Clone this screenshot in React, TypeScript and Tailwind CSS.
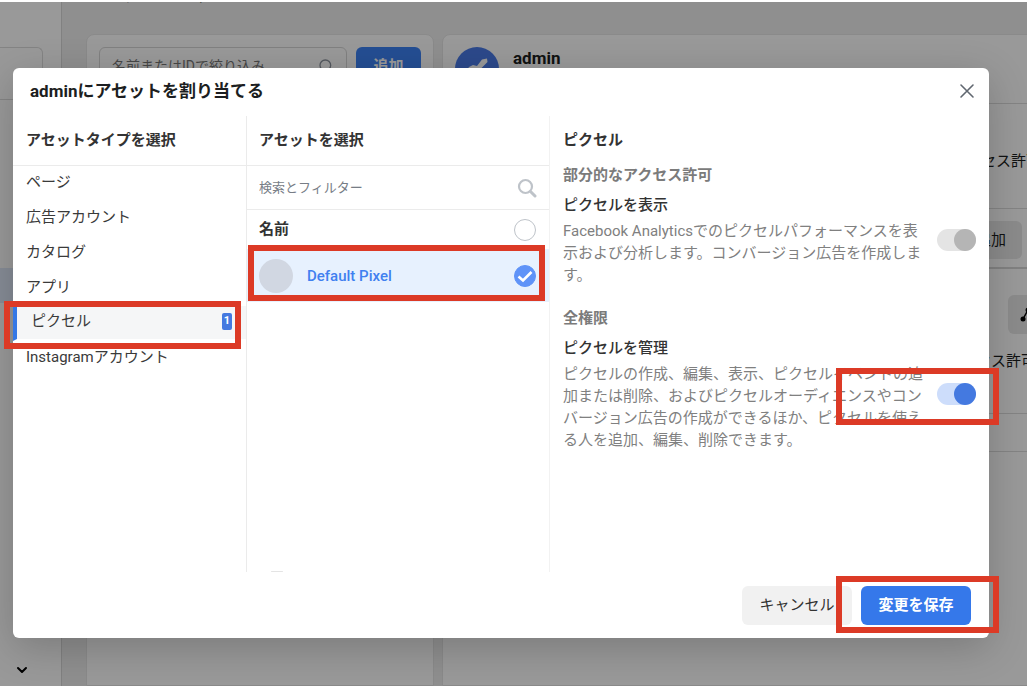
import React, { useState } from 'react';
import { ChevronDown, Search, X } from 'lucide-react';
import clsx from 'clsx';

const assetTypes = [
  { id: 'page', label: 'ページ', count: 0 },
  { id: 'ad', label: '広告アカウント', count: 0 },
  { id: 'catalog', label: 'カタログ', count: 0 },
  { id: 'app', label: 'アプリ', count: 0 },
  { id: 'pixel', label: 'ピクセル', count: 1 },
  { id: 'instagram', label: 'Instagramアカウント', count: 0 },
];

// Red frame drawn around the step the reader should follow
const Marker: React.FC<{ className: string }> = ({ className }) => (
  <span className={clsx('pointer-events-none absolute z-20 border-6 border-[#dc3a26]', className)} />
);

const Backdrop: React.FC = () => (
  <div className="absolute inset-0 flex overflow-hidden bg-[#efefef]" aria-hidden="true">
    <aside className="flex w-[62px] shrink-0 flex-col border-r border-[#d8d8d8] bg-white">
      <div className="h-[100px] border-b border-[#dcdcdc] pt-[47px]">
        <div className="mr-[18px] h-10 rounded-tr-md border-t border-r border-[#dcdcdc]" />
      </div>
      <div className="mt-[168px] h-[35px] bg-[#dfe9fb]" />
      <ChevronDown className="mt-auto mb-2 ml-3.5 h-4 w-4 text-black" strokeWidth={3} />
    </aside>

    <main className="flex min-w-0 flex-1 flex-col pl-6">
      <div className="h-[34px] shrink-0 overflow-hidden">
        <h1 className="-mt-[15px] text-lg leading-5 font-bold">システムユーザー</h1>
      </div>
      <div className="-mr-4 flex flex-1 gap-2">
        <section className="w-[348px] shrink-0 rounded-t-lg border border-[#e6e6e6] bg-white p-3">
          <div className="flex gap-[9px]">
            <div className="flex h-[38px] min-w-0 flex-1 items-center justify-between rounded-md border border-[#d8d8d8] px-3 text-[#8d949e]">
              <span className="text-sm text-[#777]">名前またはIDで絞り込み</span>
              <Search className="h-4 w-4" />
            </div>
            <div className="flex h-[38px] w-[65px] items-center justify-center rounded-md bg-[#3c83f6] text-[15px] font-bold text-white">
              追加
            </div>
          </div>
        </section>

        <section className="min-w-0 flex-1 rounded-tl-lg border border-[#e6e6e6] bg-white">
          <div className="flex h-[69px] gap-3.5 border-b border-[#dcdcdc] pt-3 pl-3">
            <svg viewBox="0 0 44 44" className="h-11 w-11">
              <circle cx="22" cy="22" r="22" fill="#4a7be8" />
              <path
                d="M10 26 L14 20 L18 18 L22 19 L27 12.500 L32 11.500 L32.500 15 L26 21.500 L27 26 L22 31 L17 33 L11 30 Z"
                fill="#fff"
              />
            </svg>
            <p className="-mt-px text-[17px] leading-6 font-bold">admin</p>
          </div>
          <div className="flex h-[105px] items-center justify-end border-b border-[#dcdcdc] pt-2.5 pr-px text-[15px]">
            アクセス許可
          </div>
          <div className="flex h-[60px] items-center justify-end border-b-2 border-[#d8d8d8] pt-1 pr-5 text-[15px]">
            <span className="rounded-md bg-[#e8e8e8] py-2 pr-4 pl-10">追加</span>
          </div>
          <div className="h-[145px] border-b border-[#dcdcdc] pt-[26px]">
            <div className="ml-auto flex h-[39px] w-[34px] items-center rounded-md bg-[#e8e8e8] pl-3">
              <svg viewBox="0 0 20 20" className="h-5 w-5 shrink-0 text-black">
                <path d="M3 14 L8 5 L16 14" fill="none" stroke="currentColor" strokeWidth="1.5" />
                <circle cx="3" cy="14" r="2.500" fill="currentColor" />
                <circle cx="8" cy="5" r="2.500" fill="currentColor" />
                <circle cx="16" cy="14" r="2.500" fill="currentColor" />
              </svg>
            </div>
            <p className="pt-4 pr-1.5 text-right text-[15px]">アクセス許可</p>
          </div>
          <div className="h-[38px] border-b border-[#dcdcdc]" />
        </section>
      </div>
    </main>
    <div className="absolute inset-0 bg-black/40" />
    <div className="absolute inset-x-0 top-0 h-0.5 bg-white" />
  </div>
);

interface PermissionProps {
  id: string;
  title: string;
  description: string;
  checked: boolean;
  disabled?: boolean;
  marked?: boolean;
  onChange?: () => void;
}

const Permission: React.FC<PermissionProps> = ({ id, title, description, checked, disabled, marked, onChange }) => (
  <div className="flex items-center gap-3">
    <div className="min-w-0 flex-1">
      <label htmlFor={id} className="block pb-1 text-[15px] leading-[22px] font-medium text-[#333]">
        {title}
      </label>
      <p className="text-[15px] leading-[22px] text-[#808080]">{description}</p>
    </div>
    <div className="relative flex shrink-0">
      <input
        id={id}
        type="checkbox"
        role="switch"
        checked={checked}
        disabled={disabled}
        onChange={onChange}
        className="h-[22px] w-[39px] appearance-none rounded-full bg-[#e4e4e4] before:block before:h-[22px] before:w-[22px] before:rounded-full before:bg-[#b5b5b5] checked:bg-[#cdddfb] checked:before:ml-[17px] checked:before:bg-[#4479e0] disabled:bg-[#e4e4e4] disabled:before:bg-[#b5b5b5]"
      />
      {marked && <Marker className="-top-[15px] -right-[23px] -bottom-5 -left-[101px]" />}
    </div>
  </div>
);

const AssignDialog: React.FC = () => {
  const [selected, setSelected] = useState('pixel');
  const [pixelChecked, setPixelChecked] = useState(true);
  const [manage, setManage] = useState(true);

  return (
    <div
      role="dialog"
      aria-labelledby="dialog-title"
      className="flex h-full min-h-[570px] flex-col rounded-md bg-white shadow-[0_10px_40px_rgba(0,0,0,0.2)]"
    >
      <header className="flex h-12 shrink-0 items-center justify-between pr-3.5 pl-[17px]">
        <h2 id="dialog-title" className="text-[17px] font-bold text-[#1c1e21]">
          adminにアセットを割り当てる
        </h2>
        <button type="button" aria-label="閉じる" className="pb-0.5 text-[#606770]">
          <svg viewBox="0 0 16 16" className="h-4 w-4">
            <path d="M2 2 L14 14 M14 2 L2 14" fill="none" stroke="currentColor" strokeWidth="1.6" strokeLinecap="round" />
          </svg>
        </button>
      </header>

      <div className="flex flex-1">
        {/* Asset types */}
        <nav className="w-[233px] shrink-0">
          <h3 className="h-[50px] border-b border-[#ebebeb] pl-[13px] text-[15px] leading-[48px] font-bold text-[#333]">
            アセットタイプを選択
          </h3>
          <ul>
            {assetTypes.map(({ id, label, count }) => (
              <li key={id} className="relative">
                <button
                  type="button"
                  onClick={() => setSelected(id)}
                  className={clsx(
                    'flex h-[35px] w-full items-center justify-between pr-3.5 pb-0.5 text-[15px] text-[#3a3a3a]',
                    selected === id ? 'border-b-2 border-l-4 border-b-white border-l-[#3578e5] bg-[#f5f6f7] pl-3.5' : 'pl-[13px]'
                  )}
                >
                  {label}
                  {count > 0 && (
                    <span className="flex h-[17px] w-2.5 items-center justify-center rounded-xs bg-[#4479e0] text-[11px] font-bold text-white">
                      {count}
                    </span>
                  )}
                </button>
                {count > 0 && <Marker className="-top-[5px] right-[5px] -bottom-2 -left-[9px]" />}
              </li>
            ))}
          </ul>
        </nav>

        {/* Assets */}
        <section className="flex w-[303px] shrink-0 flex-col border-l border-[#ebebeb]">
          <h3 className="h-[50px] border-b border-[#ebebeb] pl-3 text-[15px] leading-[48px] font-bold text-[#333]">
            アセットを選択
          </h3>
          <div className="flex h-11 items-center border-b border-[#ebebeb] pr-3 pl-3">
            <input
              type="text"
              aria-label="検索とフィルター"
              placeholder="検索とフィルター"
              className="min-w-0 flex-1 text-[13px] outline-none placeholder:text-[#777d86]"
            />
            <svg viewBox="0 0 20 20" className="h-5 w-5 text-[#bec3c9]" fill="none" stroke="currentColor">
              <circle cx="8.500" cy="8.500" r="6.500" strokeWidth="2.200" />
              <path d="M13.500 13.500 L18 18" strokeWidth="3" strokeLinecap="round" />
            </svg>
          </div>
          <label className="flex h-[39px] items-center justify-between pr-[13px] pl-3 text-[15px] font-bold text-[#333]">
            名前
            <input type="checkbox" className="h-[22px] w-[22px] appearance-none rounded-full border border-[#bec3c9]" />
          </label>
          <div className="relative">
            <label className="flex h-[53px] items-center bg-[#e7f1fe] pr-[13px] pl-3">
              <span className="h-[34px] w-[34px] rounded-full bg-[#d1d7e2]" />
              <span className="flex-1 pt-px pl-3.5 text-[15px] font-medium text-[#4080f0]">Default Pixel</span>
              <span className="relative flex">
                <input
                  type="checkbox"
                  checked={pixelChecked}
                  onChange={() => setPixelChecked(!pixelChecked)}
                  className="h-[22px] w-[22px] appearance-none rounded-full border border-[#bec3c9] checked:border-[#5f93f8] checked:bg-[#5f93f8]"
                />
                {pixelChecked && (
                  <svg viewBox="0 0 22 22" className="pointer-events-none absolute inset-0 h-[22px] w-[22px]">
                    <path d="M4.500 11.500 L9 15.500 L17.500 7" fill="none" stroke="#fff" strokeWidth="2.600" />
                  </svg>
                )}
              </span>
            </label>
            <Marker className="-top-1 right-1 bottom-px left-px" />
          </div>
          <div className="mt-auto ml-6 h-px w-3 rounded-full bg-[#e4e4e4]" />
        </section>

        {/* Permissions */}
        <section className="min-w-0 flex-1 border-l border-[#f2f2f2] pr-[13px] pl-[13px]">
          <h3 className="text-[15px] leading-[48px] font-bold text-[#333]">ピクセル</h3>
          <h4 className="pb-2 text-[15px] leading-[22px] font-bold text-[#7b7b7b]">部分的なアクセス許可</h4>
          <Permission
            id="pixel-view"
            title="ピクセルを表示"
            description="Facebook Analyticsでのピクセルパフォーマンスを表示および分析します。コンバージョン広告を作成します。"
            checked
            disabled
          />
          <h4 className="pt-[21px] pb-2 text-[15px] leading-[22px] font-bold text-[#7b7b7b]">全権限</h4>
          <Permission
            id="pixel-manage"
            title="ピクセルを管理"
            description="ピクセルの作成、編集、表示、ピクセルイベントの追加または削除、およびピクセルオーディエンスやコンバージョン広告の作成ができるほか、ピクセルを使える人を追加、編集、削除できます。"
            checked={manage}
            onChange={() => setManage(!manage)}
            marked
          />
        </section>
      </div>

      <footer className="flex shrink-0 justify-end gap-[9px] pt-3.5 pr-[18px] pb-[13px] text-[15px]">
        <button type="button" className="h-[39px] w-[110px] rounded-md bg-[#f1f1f1] text-[#333]">
          キャンセル
        </button>
        <div className="relative">
          <button type="button" className="h-[39px] w-[110px] rounded-md bg-[#3578ea] font-bold text-white">
            変更を保存
          </button>
          <Marker className="-top-2.5 -right-7 -bottom-2 -left-[25px]" />
        </div>
      </footer>
    </div>
  );
};

const App: React.FC = () => {
  return (
    <div className="relative h-screen min-h-[686px] overflow-hidden font-[Roboto,'Noto_Sans_CJK_JP',sans-serif] text-[#1c1e21]">
      <Backdrop />
      <div className="absolute inset-0 pt-[68px] pr-[38px] pb-12 pl-[13px]">
        <AssignDialog />
      </div>
    </div>
  );
};

export default App;
